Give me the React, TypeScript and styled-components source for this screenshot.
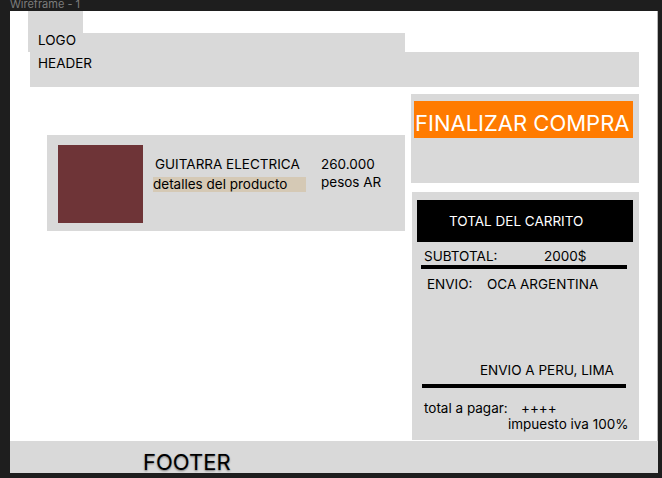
import React from 'react';
import styled, { createGlobalStyle } from 'styled-components';

const GlobalStyle = createGlobalStyle`
  html, body {
    margin: 0;
    padding: 0;
    background: #1e1e1e;
  }
  body {
    font-family: Inter, "Noto Sans", sans-serif;
    color: #000;
    width: 662px;
    height: 478px;
    overflow: hidden;
  }
`;

const Canvas = styled.div`
  width: 662px;
  height: 478px;
  overflow: hidden;
`;

const FrameLabel = styled.div`
  height: 11px;
  padding-left: 10px;
  font-size: 11px;
  line-height: 11px;
  margin-top: -1px;
  margin-bottom: 1px;
  color: #7c7c7c;
  white-space: nowrap;
`;

const Frame = styled.div`
  width: 647px;
  height: 462px;
  margin-left: 10px;
  background: #fff;
  border-right: 1px solid #b8b8b8;
  display: flex;
  flex-direction: column;
`;

const Block = styled.div<{ $w: number; $h: number; $ml: number }>`
  width: ${(p) => p.$w}px;
  height: ${(p) => p.$h}px;
  margin-left: ${(p) => p.$ml}px;
  background: #d9d9d9;
  box-sizing: border-box;
`;

const HeadText = styled(Block)`
  font-size: 13.5px;
  line-height: 15px;
`;

const Main = styled.div`
  display: flex;
  align-items: flex-start;
`;

const ProductCard = styled.div`
  width: 358px;
  height: 96px;
  margin: 48px 0 0 37px;
  padding: 10px 0 0 11px;
  box-sizing: border-box;
  background: #d9d9d9;
  display: flex;
  align-items: flex-start;
`;

const Thumb = styled.div`
  width: 85px;
  height: 78px;
  flex: 0 0 85px;
  background: #6e3437;
`;

const Info = styled.div`
  width: 153px;
  margin: 11px 0 0 10px;
  font-size: 13.5px;
`;

const Title = styled.div`
  line-height: 16px;
  padding-left: 2px;
  white-space: nowrap;
`;

const Details = styled.div`
  margin-top: 5px;
  height: 15px;
  line-height: 15px;
  background: #d5c9b5;
  white-space: nowrap;
`;

const Price = styled.div`
  margin: 10px 0 0 15px;
  font-size: 13.5px;
  line-height: 18px;
`;

const SideCol = styled.div`
  margin: 7px 0 0 6px;
  display: flex;
  flex-direction: column;
`;

const CheckoutPanel = styled.div`
  width: 228px;
  height: 89px;
  padding: 7px 0 0 3px;
  box-sizing: border-box;
  background: #d9d9d9;
`;

const CheckoutButton = styled.button`
  display: block;
  width: 219px;
  height: 37px;
  padding: 7px 0 0 1px;
  margin: 0;
  border: 0;
  box-sizing: border-box;
  background: #ff7b00;
  color: #fff;
  font-family: Inter, "Noto Sans", sans-serif;
  font-size: 22px;
  line-height: 29px;
  text-align: left;
  white-space: nowrap;
  overflow: hidden;
`;

const CartPanel = styled.div`
  width: 227px;
  height: 248px;
  margin: 9px 0 0 1px;
  padding-top: 8px;
  box-sizing: border-box;
  background: #d9d9d9;
  font-size: 13.5px;
  line-height: 16px;
`;

const CartTitle = styled.div`
  width: 216px;
  height: 42px;
  margin-left: 5px;
  padding: 13px 0 0 32px;
  box-sizing: border-box;
  background: #000;
  color: #fff;
`;

const Row = styled.div<{ $mt: number; $ml: number }>`
  display: flex;
  margin-top: ${(p) => p.$mt}px;
  margin-left: ${(p) => p.$ml}px;
  white-space: nowrap;
`;

const Label = styled.span<{ $w: number }>`
  width: ${(p) => p.$w}px;
  flex: 0 0 ${(p) => p.$w}px;
`;

const Rule = styled.div<{ $w: number; $mt: number; $ml: number }>`
  width: ${(p) => p.$w}px;
  height: 4px;
  margin-top: ${(p) => p.$mt}px;
  margin-left: ${(p) => p.$ml}px;
  background: #000;
`;

const Footer = styled.div`
  margin-top: auto;
  margin-right: -1px;
  height: 32px;
  padding: 10px 0 0 133px;
  box-sizing: border-box;
  background: #d9d9d9;
  font-size: 22px;
  line-height: 22px;
  text-shadow: 0 1px 2px rgba(0, 0, 0, 0.45);
`;

export default function App() {
  return (
    <Canvas>
      <GlobalStyle />
      <FrameLabel>Wireframe - 1</FrameLabel>
      <Frame>
        <Block $w={55} $h={22} $ml={18} />
        <HeadText $w={377} $h={19} $ml={18} style={{ paddingLeft: 10 }}>
          LOGO
        </HeadText>
        <HeadText $w={609} $h={35} $ml={20} style={{ paddingLeft: 8, paddingTop: 3.5 }}>
          HEADER
        </HeadText>
        <Main>
          <ProductCard>
            <Thumb />
            <Info>
              <Title>GUITARRA ELECTRICA</Title>
              <Details>detalles del producto</Details>
            </Info>
            <Price>
              <div>260.000</div>
              <div>pesos AR</div>
            </Price>
          </ProductCard>
          <SideCol>
            <CheckoutPanel>
              <CheckoutButton>FINALIZAR COMPRA</CheckoutButton>
            </CheckoutPanel>
            <CartPanel>
              <CartTitle>TOTAL DEL CARRITO</CartTitle>
              <Row $mt={6} $ml={12}>
                <Label $w={120}>SUBTOTAL:</Label>
                <span>2000$</span>
              </Row>
              <Rule $w={206} $mt={1} $ml={9} />
              <Row $mt={7} $ml={15}>
                <Label $w={60}>ENVIO:</Label>
                <span>OCA ARGENTINA</span>
              </Row>
              <Row $mt={70} $ml={68}>
                ENVIO A PERU, LIMA
              </Row>
              <Rule $w={204} $mt={6} $ml={10} />
              <Row $mt={12} $ml={12}>
                <Label $w={97}>total a pagar:</Label>
                <span>++++</span>
              </Row>
              <Row $mt={0} $ml={96}>
                impuesto iva 100%
              </Row>
            </CartPanel>
          </SideCol>
        </Main>
        <Footer>FOOTER</Footer>
      </Frame>
    </Canvas>
  );
}
